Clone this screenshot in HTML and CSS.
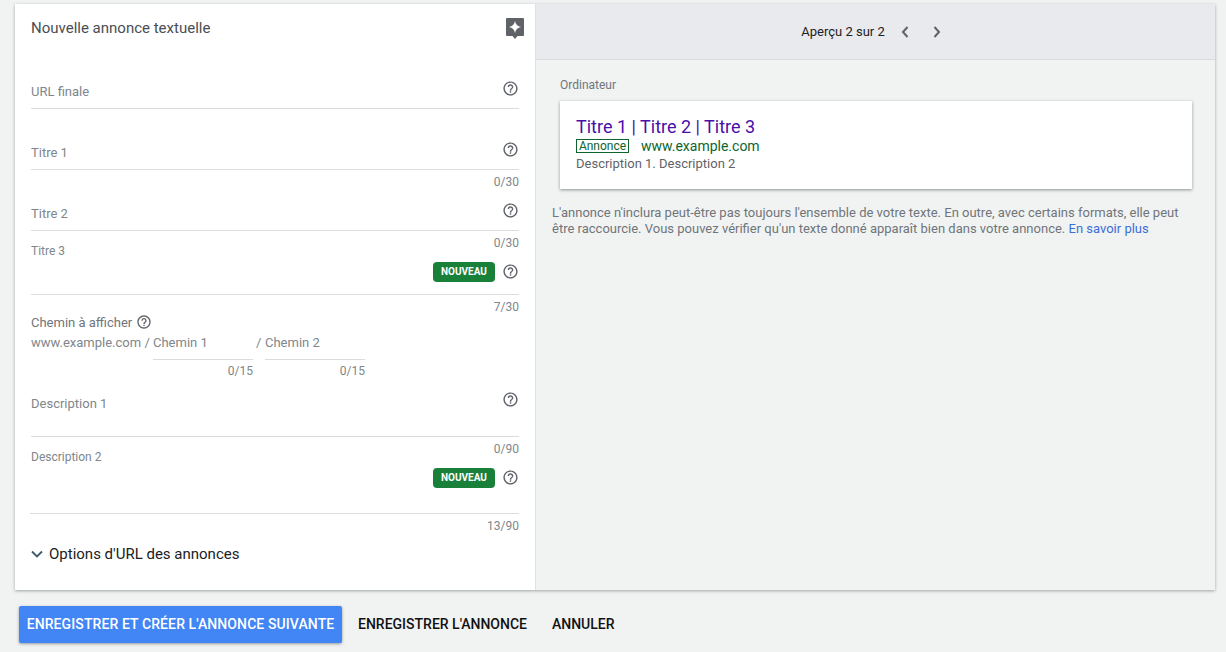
FILE: index.html
```html
<!DOCTYPE html>
<html lang="fr">
<head>
<meta charset="utf-8">
<title>Nouvelle annonce textuelle</title>
<link rel="stylesheet" href="styles.css">
</head>
<body>
<svg class="defs" width="0" height="0" aria-hidden="true"><defs><symbol id="help" viewBox="0 0 24 24"><path d="M11 18h2v-2h-2v2zm1-16C6.48 2 2 6.48 2 12s4.48 10 10 10 10-4.48 10-10S17.52 2 12 2zm0 18c-4.41 0-8-3.59-8-8s3.59-8 8-8 8 3.59 8 8-3.59 8-8 8zm0-14c-2.21 0-4 1.79-4 4h2c0-1.1.9-2 2-2s2 .9 2 2c0 2-3 1.75-3 5h2c0-2.25 3-2.5 3-5 0-2.21-1.79-4-4-4z"/></symbol></defs></svg>
<main class="card">
  <section class="editor">
    <header class="editor-head">
      <h1 class="editor-title">Nouvelle annonce textuelle</h1>
      <svg class="spark" viewBox="0 0 18 22"><path d="M1 0h16a1 1 0 0 1 1 1v16a1 1 0 0 1-1 1h-5.500L9 21l-2.500-3H1a1 1 0 0 1-1-1V1a1 1 0 0 1 1-1z" fill="#5f6368"/><path d="M9 3c.6 3.500 2.500 5.400 6 6-3.500.6-5.400 2.500-6 6-.6-3.500-2.500-5.400-6-6 3.500-.6 5.400-2.500 6-6z" fill="#fff"/></svg>
    </header>

    <div class="field f-url"><span class="label">URL finale</span><svg class="help"><use href="#help"/></svg></div>

    <div class="field f-t1"><span class="label">Titre 1</span><svg class="help"><use href="#help"/></svg></div>
    <div class="count">0/30</div>

    <div class="field f-t2"><span class="label">Titre 2</span><svg class="help"><use href="#help"/></svg></div>
    <div class="count">0/30</div>

    <div class="field f-t3"><span class="label label-sm">Titre 3</span>
      <div class="tools"><span class="badge">NOUVEAU</span><svg class="help"><use href="#help"/></svg></div></div>
    <div class="count">7/30</div>

    <div class="path-head"><span>Chemin à afficher</span><svg class="help"><use href="#help"/></svg></div>
    <div class="path-row">
      <span class="domain">www.example.com /</span>
      <div class="path-col"><div class="path-input">Chemin 1</div><div class="path-count">0/15</div></div>
      <span class="slash">/</span>
      <div class="path-col"><div class="path-input">Chemin 2</div><div class="path-count">0/15</div></div>
    </div>

    <div class="field f-d1"><span class="label">Description 1</span><svg class="help"><use href="#help"/></svg></div>
    <div class="count">0/90</div>

    <div class="field f-d2"><span class="label label-sm">Description 2</span>
      <div class="tools"><span class="badge">NOUVEAU</span><svg class="help"><use href="#help"/></svg></div></div>
    <div class="count">13/90</div>

    <div class="options">
      <svg class="chev" viewBox="0 0 12 8"><path d="M1 1.500l5 5 5-5" fill="none" stroke="#3c5a6e" stroke-width="1.800"/></svg>
      <span>Options d'URL des annonces</span>
    </div>
  </section>

  <section class="preview">
    <header class="preview-head">
      <span class="pager">Aperçu 2 sur 2</span>
      <svg class="nav" viewBox="0 0 10 14"><path d="M7.500 2L3 7l4.500 5" fill="none" stroke="#5f6368" stroke-width="2"/></svg>
      <svg class="nav" viewBox="0 0 10 14"><path d="M2.500 2L7 7l-4.500 5" fill="none" stroke="#5f6368" stroke-width="2"/></svg>
    </header>
    <div class="preview-body">
      <div class="device">Ordinateur</div>
      <article class="ad">
        <div class="ad-title">Titre 1 | Titre 2 | Titre 3</div>
        <div class="ad-line"><span class="ad-tag">Annonce</span><span class="ad-url">www.example.com</span></div>
        <div class="ad-desc">Description 1. Description 2</div>
      </article>
      <p class="note">L'annonce n'inclura peut-être pas toujours l'ensemble de votre texte. En outre, avec certains formats, elle peut être raccourcie. Vous pouvez vérifier qu'un texte donné apparaît bien dans votre annonce. <a class="more" href="#">En savoir plus</a></p>
    </div>
  </section>
</main>
<footer class="actions">
  <button class="btn btn-primary">ENREGISTRER ET CRÉER L'ANNONCE SUIVANTE</button>
  <button class="btn btn-save">ENREGISTRER L'ANNONCE</button>
  <button class="btn">ANNULER</button>
</footer>
</body>
</html>
```
FILE: styles.css
```css
* { box-sizing: border-box; }
html, body { height: 100%; }
body {
  margin: 0;
  background: #f1f3f3;
  font-family: Roboto, "Liberation Sans", sans-serif;
  color: #3c4043;
  overflow: hidden;
}
.defs { position: absolute; }

.card {
  display: flex;
  width: 1200px;
  height: 586px;
  margin: 4px 0 0 15px;
  background: #f1f3f3;
  box-shadow: 0 1px 3px rgba(60, 64, 67, .45);
}

.editor {
  width: 521px;
  flex: none;
  padding: 0 16px;
  background: #fff;
  border-right: 1px solid #e0e0e0;
}
.editor-head {
  display: flex;
  justify-content: space-between;
  height: 44px;
  padding-top: 14px;
}
.editor-title {
  margin: 0;
  font-size: 15px;
  font-weight: 400;
  line-height: 20px;
  color: #4a4e52;
}
.spark { width: 18px; height: 22px; margin-right: -5px; }

.field {
  display: flex;
  justify-content: space-between;
  align-items: flex-start;
  border-bottom: 1px solid #dadce0;
  font-size: 13px;
}
.label { color: #80868b; line-height: 16px; }
.label-sm { font-size: 12px; margin-top: 2px; }
.help { width: 17px; height: 17px; flex: none; fill: #5f6368; }

.f-url { height: 61px; }
.f-url .label { margin-top: 36px; }
.f-url .help { margin-top: 32px; }
.f-t1 { height: 50px; margin-top: 11px; }
.f-t1 .label { margin-top: 25px; }
.f-t1 .help { margin-top: 21px; }
.f-t2 { height: 37px; }
.f-t2 .label { margin-top: 12px; }
.f-t2 .help { margin-top: 8px; }
.f-t3 { height: 54px; margin-top: -14px; }
.f-d1 { height: 58px; }
.f-d1 .label { margin-top: 17px; }
.f-d1 .help { margin-top: 12px; }
.f-d2 { height: 67px; margin: -14px 0 0 -1px; }
.f-d2 .label { margin-left: 1px; }

.tools { display: flex; align-items: center; gap: 7px; height: 20px; margin-top: 21px; }
.tools .help { margin-top: -2px; }
.badge {
  width: 62px;
  height: 20px;
  border-radius: 4px;
  background: #188038;
  color: #fff;
  font-size: 10px;
  font-weight: 700;
  line-height: 20px;
  text-align: center;
}

.count {
  height: 24px;
  padding-top: 5px;
  font-size: 12px;
  line-height: 14px;
  color: #80868b;
  text-align: right;
}

.path-head {
  display: flex;
  align-items: center;
  gap: 4px;
  margin-top: -6px;
  height: 18px;
  font-size: 13px;
  color: #70757a;
}
.path-head .help { width: 16px; height: 16px; }
.path-row {
  display: flex;
  margin-top: 3px;
  font-size: 13px;
  line-height: 16px;
  color: #5f6368;
}
.domain { width: 122px; padding-top: 1px; white-space: nowrap; color: #80868b; }
.slash { width: 12px; padding: 1px 0 0 3px; color: #80868b; }
.path-col { width: 100px; }
.path-input {
  height: 26px;
  padding-top: 1px;
  border-bottom: 1px solid #dadce0;
  color: #80868b;
}
.path-count { padding-top: 3px; font-size: 12px; color: #80868b; text-align: right; }

.options {
  display: flex;
  align-items: center;
  gap: 6px;
  margin-top: 4px;
  height: 24px;
  font-size: 15px;
  color: #202124;
}
.chev { width: 12px; height: 8px; }

.preview { flex: 1; min-width: 0; }
.preview-head {
  display: flex;
  align-items: center;
  justify-content: center;
  height: 56px;
  background: #e8eaed;
  border-bottom: 1px solid #dadce0;
  padding-left: 8px;
  font-size: 13px;
  color: #202124;
}
.pager { margin-right: 9px; }
.nav { width: 22px; height: 14px; margin-right: 10px; }
.preview-body { padding: 18px 16px 0; }
.device { padding-left: 8px; font-size: 12px; line-height: 14px; color: #70757a; }
.ad {
  margin: 9px 7px 0 8px;
  height: 88px;
  padding: 15px 16px 0;
  background: #fff;
  box-shadow: 0 1px 3px rgba(60, 64, 67, .55);
}
.ad-title { font-size: 18px; line-height: 22px; color: #4a0fa8; }
.ad-line { display: flex; align-items: center; height: 16px; }
.ad-tag {
  width: 53px;
  height: 14px;
  border: 1px solid #0d652d;
  font-size: 12px;
  line-height: 13px;
  text-align: center;
  color: #0d652d;
}
.ad-url { margin-left: 12px; font-size: 14px; color: #0d652d; }
.ad-desc { margin-top: 2px; font-size: 13px; line-height: 16px; color: #5f6368; }
.note {
  margin: 16px 0 0;
  width: 640px;
  font-size: 13px;
  line-height: 16px;
  color: #70757a;
}
.more { color: #3b6fd8; text-decoration: none; }

.actions { display: flex; align-items: center; margin: 16px 0 0 19px; }
.btn {
  height: 37px;
  padding: 0 0 1px;
  border: 0;
  border-radius: 2px;
  background: none;
  font: 500 14px Roboto, "Liberation Sans", sans-serif;
  color: #111;
}
.btn-primary {
  width: 323px;
  background: #4285f4;
  color: #fff;
  letter-spacing: .1px;
  box-shadow: 0 1px 3px rgba(60, 64, 67, .5);
}
.btn-save { margin: 0 25px 0 16px; }
```
